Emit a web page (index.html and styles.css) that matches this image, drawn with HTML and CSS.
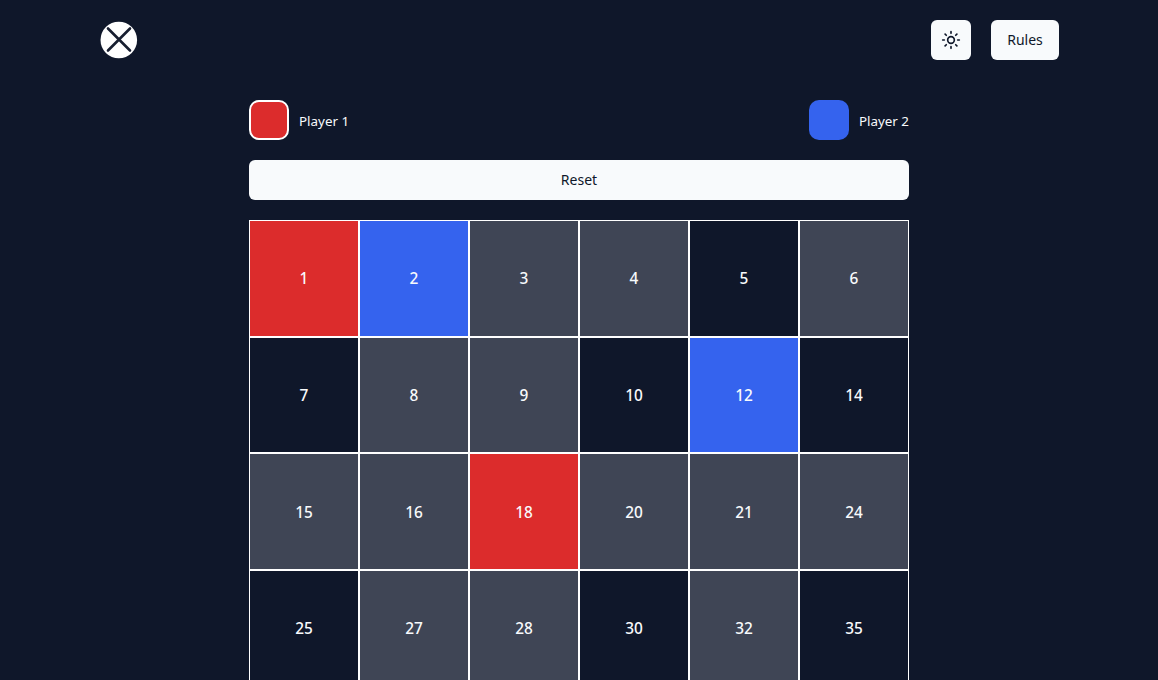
FILE: index.html
```html
<!DOCTYPE html>
<html lang="en">
<head>
<meta charset="utf-8">
<title>Game</title>
<link rel="stylesheet" href="styles.css">
</head>
<body>
<header class="topbar">
  <div class="logo">
    <svg width="38" height="38" viewBox="0 0 38 38"><circle cx="18.8" cy="19" r="18.3" fill="#fff"/><path d="M8 7.5 30 29.5M30 7.5 8 29.5" stroke="#171e30" stroke-width="2.6" stroke-linecap="round"/></svg>
  </div>
  <div class="actions">
    <button class="btn icon-btn" aria-label="Theme">
      <svg width="20" height="20" viewBox="0 0 24 24" fill="none" stroke="#0f172a" stroke-width="2" stroke-linecap="round"><circle cx="12" cy="12" r="4"/><path d="M12 2v2M12 20v2M4.93 4.93l1.41 1.41M17.66 17.66l1.41 1.41M2 12h2M20 12h2M6.34 17.66l-1.41 1.41M19.07 4.93l-1.41 1.41"/></svg>
    </button>
    <button class="btn rules-btn"><span class="btn-label">Rules</span></button>
  </div>
</header>
<main class="game">
  <div class="players">
    <div class="player"><span class="swatch red active"></span><span class="player-name">Player 1</span></div>
    <div class="player"><span class="swatch blue"></span><span class="player-name">Player 2</span></div>
  </div>
  <button class="btn reset"><span class="btn-label">Reset</span></button>
  <div class="board">
    <div class="cell red">1</div><div class="cell blue">2</div><div class="cell gray">3</div><div class="cell gray">4</div><div class="cell">5</div><div class="cell gray">6</div>
    <div class="cell">7</div><div class="cell gray">8</div><div class="cell gray">9</div><div class="cell">10</div><div class="cell blue">12</div><div class="cell">14</div>
    <div class="cell gray">15</div><div class="cell gray">16</div><div class="cell red">18</div><div class="cell gray">20</div><div class="cell gray">21</div><div class="cell gray">24</div>
    <div class="cell">25</div><div class="cell gray">27</div><div class="cell gray">28</div><div class="cell">30</div><div class="cell gray">32</div><div class="cell">35</div>
  </div>
</main>
</body>
</html>
```
FILE: styles.css
```css
* { box-sizing: border-box; }
html, body { height: 100%; overflow: hidden; }
body {
  margin: 0;
  background: #0f172a;
  color: #f8fafc;
  font-family: "Noto Sans", sans-serif;
  font-size: 14px;
}
.topbar {
  display: flex;
  justify-content: space-between;
  align-items: center;
  padding: 20px 99px 20px 100px;
}
.logo { width: 38px; height: 38px; }
.logo svg { display: block; }
.actions { display: flex; gap: 20px; }
.btn {
  height: 40px;
  border: 0;
  border-radius: 6px;
  background: #f8fafc;
  color: #0f172a;
  font: 400 14px "Noto Sans", sans-serif;
  display: flex;
  align-items: center;
  justify-content: center;
  padding: 0 0 2px;
}
.icon-btn { width: 40px; padding: 0; }
.rules-btn { width: 68px; }
.game {
  width: 660px;
  margin: 20px auto 0;
}
.players {
  display: flex;
  justify-content: space-between;
  margin-bottom: 20px;
}
.player { display: flex; align-items: center; gap: 10px; }
.player-name { font-size: 13.4px; line-height: 20px; padding-top: 2px; }
.swatch { width: 40px; height: 40px; border-radius: 10px; }
.swatch.active { border: 2px solid #fff; }
.swatch.red, .cell.red { background: #dc2c2c; }
.swatch.blue, .cell.blue { background: #3563ee; }
.reset { width: 100%; margin-bottom: 20px; }
.board {
  display: grid;
  grid-template-columns: repeat(6, 1fr);
  grid-template-rows: repeat(6, 1fr);
  height: 700px;
}
.cell {
  border: 1px solid #fff;
  display: flex;
  align-items: center;
  justify-content: center;
  padding-top: 1px;
  font-size: 15.4px;
  font-weight: 500;
}
.cell.gray { background: #3f4555; }
```
